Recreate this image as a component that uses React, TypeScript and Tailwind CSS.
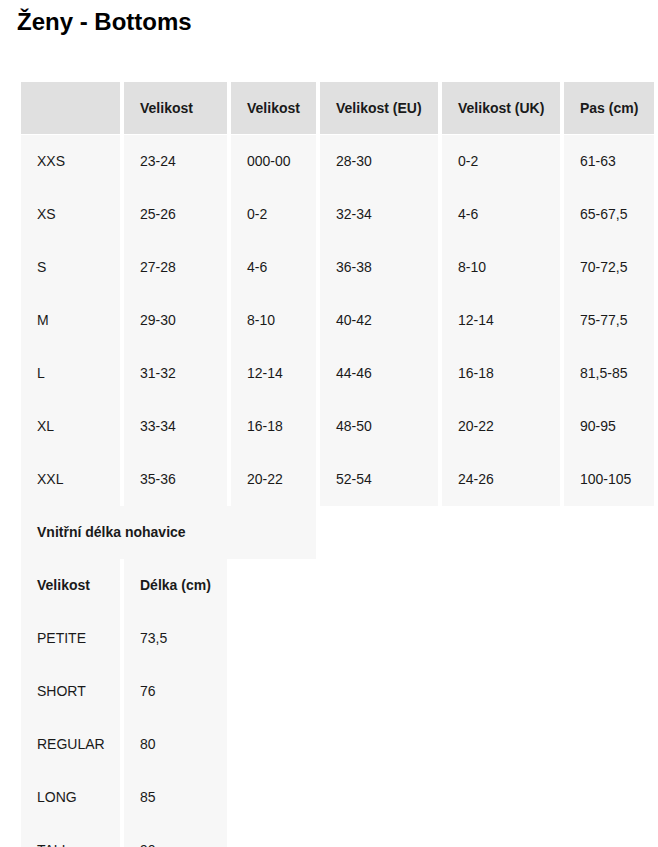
import React from 'react';

const sizes = [
  ['XXS', '23-24', '000-00', '28-30', '0-2', '61-63'],
  ['XS', '25-26', '0-2', '32-34', '4-6', '65-67,5'],
  ['S', '27-28', '4-6', '36-38', '8-10', '70-72,5'],
  ['M', '29-30', '8-10', '40-42', '12-14', '75-77,5'],
  ['L', '31-32', '12-14', '44-46', '16-18', '81,5-85'],
  ['XL', '33-34', '16-18', '48-50', '20-22', '90-95'],
  ['XXL', '35-36', '20-22', '52-54', '24-26', '100-105'],
];

const inseam = [
  ['PETITE', '73,5'],
  ['SHORT', '76'],
  ['REGULAR', '80'],
  ['LONG', '85'],
  ['TALL', '90'],
];

const headers = ['', 'Velikost', 'Velikost', 'Velikost (EU)', 'Velikost (UK)', 'Pas (cm)'];

export default function App() {
  return (
    <div className="min-h-screen bg-white pl-[17px] text-[#1a1a1a] font-['Liberation_Sans',Arial,sans-serif]">
      <h1 className="pt-[8px] text-[24px] leading-[28px] font-bold text-black">Ženy - Bottoms</h1>

      <table className="mt-[46px] w-[641px] table-fixed border-separate border-spacing-x-[4px] border-spacing-y-0 text-[14px]">
        <colgroup>
          <col className="w-[99px]" />
          <col className="w-[103px]" />
          <col className="w-[85px]" />
          <col className="w-[118px]" />
          <col className="w-[118px]" />
          <col className="w-[90px]" />
        </colgroup>
        <thead>
          <tr>
            {headers.map((h, i) => (
              <th
                key={i}
                className="h-[53px] border-b border-white bg-[#e0e0e0] pl-4 text-left align-middle font-bold"
              >
                {h}
              </th>
            ))}
          </tr>
        </thead>
        <tbody>
          {sizes.map((row) => (
            <tr key={row[0]}>
              {row.map((cell, i) => (
                <td key={i} className="h-[53px] bg-[#f7f7f7] pl-4 align-middle">
                  {cell}
                </td>
              ))}
            </tr>
          ))}

          {/* Inseam section */}
          <tr>
            <td colSpan={3} className="h-[53px] bg-[#f7f7f7] pl-4 align-middle font-bold">
              Vnitřní délka nohavice
            </td>
          </tr>
          <tr>
            <td className="h-[53px] bg-[#f7f7f7] pl-4 align-middle font-bold">Velikost</td>
            <td className="h-[53px] bg-[#f7f7f7] pl-4 align-middle font-bold">Délka (cm)</td>
          </tr>
          {inseam.map((row) => (
            <tr key={row[0]}>
              <td className="h-[53px] bg-[#f7f7f7] pl-4 align-middle">{row[0]}</td>
              <td className="h-[53px] bg-[#f7f7f7] pl-4 align-middle">{row[1]}</td>
            </tr>
          ))}
        </tbody>
      </table>
    </div>
  );
}
